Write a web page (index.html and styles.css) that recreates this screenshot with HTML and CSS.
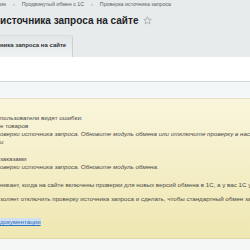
FILE: index.html
```html
<!DOCTYPE html>
<html lang="ru">
<head>
    <meta charset="UTF-8">
    <title>Проверка источника запроса на сайте</title>
    <link rel="stylesheet" href="styles.css">
</head>
<body>
    <div class="crumbs">
        <span>ин</span>
        <span class="sep">›</span>
        <span>Продвинутый обмен с 1С</span>
        <span class="sep">›</span>
        <span>Проверка источника запроса</span>
    </div>

    <h1 class="title">
        источника запроса на сайте
        <svg class="star" width="9" height="9" viewBox="0 0 10 10">
            <path d="M5 0.8 L6.2 3.6 L9.2 3.8 L6.9 5.8 L7.6 8.8 L5 7.2 L2.4 8.8 L3.1 5.8 L0.8 3.8 L3.8 3.6 Z" fill="none" stroke="#a4a9ac" stroke-width="0.9" stroke-linejoin="round"/>
        </svg>
    </h1>

    <div class="tabs">
        <div class="tab">ника запроса на сайте</div>
    </div>
    <div class="tab-body"></div>
    <div class="strip"></div>

    <!-- note about exchange errors -->
    <div class="note">
        <p>пользователи видят ошибки:</p>
        <div class="item">
            <div>е товаров</div>
            <div class="err">оверки источника запроса. Обновите модуль обмена или отключите проверку в настройках<br>и</div>
        </div>
        <div class="item gap">
            <div>заказами</div>
            <div class="err">оверки источника запроса. Обновите модуль обмена.</div>
        </div>
        <p class="p-mid">никает, когда на сайте включены проверки для новых версий обмена в 1С, а у вас 1С устаревшей версии</p>
        <p class="p-small">золяет отключить проверку источника запроса и сделать, чтобы стандартный обмен заработал</p>
        <p class="p-link"><a href="#">документации</a></p>
    </div>
    <div class="footer"></div>
</body>
</html>
```

FILE: styles.css
```css
body {
    margin: 0;
    background-color: #e7ebec;
    font-family: "Liberation Sans", Arial, sans-serif;
    overflow: hidden;
}

.crumbs {
    height: 9px;
    line-height: 9px;
    font-size: 5.3px;
    color: #5d6265;
    white-space: nowrap;
    display: flex;
    gap: 7px;
}

.crumbs .sep {
    color: #8a8f92;
}

.title {
    margin: 0;
    padding: 5px 0 7px;
    line-height: 14px;
    font-size: 10px;
    font-weight: bold;
    color: #1f2326;
    white-space: nowrap;
    display: flex;
    align-items: center;
    gap: 5px;
}

.star {
    margin-top: -2px;
}

.tabs {
    display: flex;
}

.tab {
    box-sizing: border-box;
    width: 73px;
    height: 22px;
    line-height: 19px;
    border-top: 1px solid #d9dddf;
    border-right: 1px solid #cbd0d2;
    border-radius: 0 3px 0 0;
    background: linear-gradient(#e2e6e7, #eff2f3);
    font-size: 6px;
    font-weight: bold;
    color: #2e3235;
    white-space: nowrap;
}

.tab-body {
    height: 24px;
    background-color: #fff;
    border-bottom: 1px solid #d3d8da;
}

.strip {
    height: 16px;
    background-color: #f4f7f8;
    border-bottom: 1px solid #e7e1c1;
}

.note {
    padding: 15px 0 12px;
    background: linear-gradient(#f9f5dc, #efe7b2);
    border-bottom: 1px solid #e0d8a4;
    font-size: 6.2px;
    line-height: 8px;
    color: #4a4a4a;
    white-space: nowrap;
    overflow: hidden;
}

.note p {
    margin: 0;
}

.item.gap {
    margin-top: 9px;
}

.err {
    font-style: italic;
}

.note .p-mid {
    margin-top: 10px;
}

.note .p-small {
    margin-top: 6px;
}

.note .p-link {
    margin-top: 15px;
}

.p-link a {
    color: #2b6fbf;
    background-color: #cfe0f1;
}

.footer {
    height: 12px;
    background-color: #f5f7f7;
}
```
